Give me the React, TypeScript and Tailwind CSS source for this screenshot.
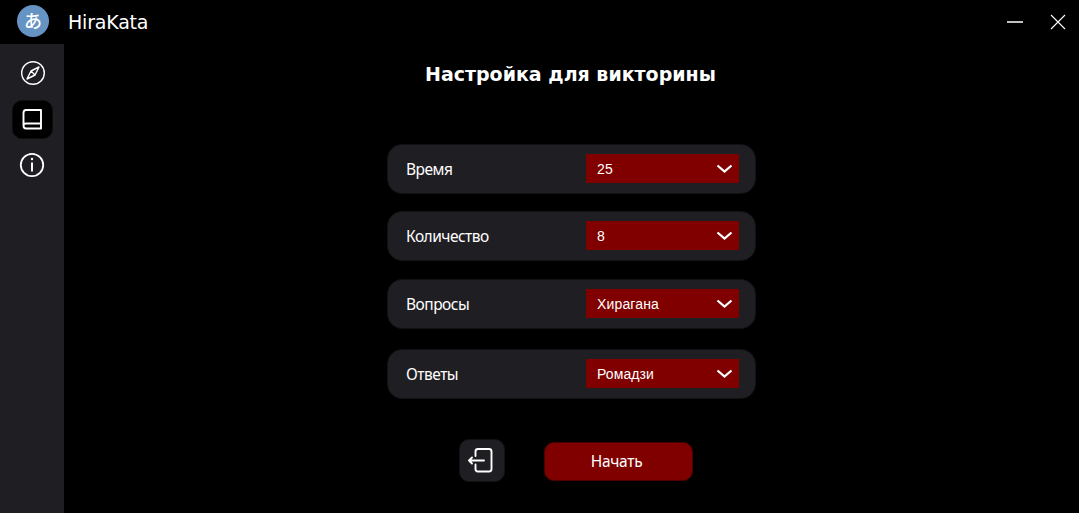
import React from "react";

const rows = [
  { label: "Время", value: "25", gap: "mt-0", track: "tracking-[0.3px]" },
  { label: "Количество", value: "8", gap: "mt-[17px]", track: "tracking-normal" },
  { label: "Вопросы", value: "Хирагана", gap: "mt-[18px]", track: "tracking-[0.15px]" },
  { label: "Ответы", value: "Ромадзи", gap: "mt-[20px]", track: "tracking-[0.1px]" },
];

function Chevron() {
  return (
    <svg className="mt-px h-[10px] w-[18px]" viewBox="0 0 18 10" fill="none" stroke="white" strokeWidth="2.3">
      <path d="M1.500 1.500 8.500 7.500l7-6" />
    </svg>
  );
}

export default function App() {
  return (
    <div className="flex h-[513px] w-[1079px] flex-col overflow-hidden bg-black text-white">
      <header className="flex h-11 shrink-0 items-start">
        <svg className="mt-[5px] ml-[17px] size-8" viewBox="0 0 32 32">
          <circle cx="16" cy="16" r="16" fill="#6593c3" />
          <text x="16" y="22.500" textAnchor="middle" fill="white" fontSize="18" fontWeight="500" fontFamily="'Noto Sans CJK JP', sans-serif">あ</text>
        </svg>
        <span className="mt-2 ml-[19px] font-['DejaVu_Sans',sans-serif] text-[19px] leading-7 tracking-[-0.2px]">HiraKata</span>
        <div className="mt-[13px] mr-3 ml-auto flex gap-[25px]">
          <svg className="h-[18px] w-[18px]" viewBox="0 0 18 18"><path d="M1 8h16v2H1z" fill="#c0c0c0" /></svg>
          <svg className="h-[18px] w-[18px]" viewBox="0 0 18 18"><path d="M2 2l14 14M16 2 2 16" stroke="white" strokeWidth="1.1" /></svg>
        </div>
      </header>
      <div className="flex min-h-0 flex-1">
        <aside className="flex w-16 shrink-0 flex-col items-center bg-[#1f1e23]">
          <svg className="mt-4 ml-0.5 size-[26px]" viewBox="0 0 26 26" fill="none" stroke="white" strokeWidth="1.4" strokeLinejoin="round">
            <circle cx="13" cy="13" r="11.3" />
            <path d="M19 7l-4 8L7 19l4-8L19 7ZM11 11l4 4" strokeWidth="1.400" />
          </svg>
          <div className="mt-[14px] ml-px flex h-[39px] w-[41px] items-center justify-center rounded-[10px] border border-[#0d0c0f] bg-black">
            <svg className="mr-px mb-px size-[22px]" viewBox="0 0 22 22" fill="none" stroke="white" strokeWidth="1.900" strokeLinejoin="round">
              <path d="M20 15.500V2H5Q2.500 2 2.500 5v12.500Q2.500 20.500 5 20.500H20v-5H5Q2.500 15.500 2.500 17.500" />
            </svg>
          </div>
          <svg className="mt-[13px] size-[26px]" viewBox="0 0 26 26" fill="none" stroke="white">
            <circle cx="13" cy="13" r="11.2" strokeWidth="1.8" />
            <path d="M13 10.500v9" strokeWidth="2" />
            <circle cx="13" cy="7" r="1.2" fill="white" stroke="none" />
          </svg>
        </aside>
        <main className="flex flex-1 flex-col">
          <h1 className="mt-4 ml-[361px] font-['DejaVu_Sans',sans-serif] text-[19px] leading-7 font-bold whitespace-nowrap">Настройка для викторины</h1>
          <div className="mt-[56px] ml-[323px] flex w-[369px] flex-col">
            {rows.map((r) => (
              <div key={r.label} className={`flex h-[50px] items-center rounded-[15px] border border-[#121114] bg-[#1f1e23] ${r.gap}`}>
                <span className="ml-[18px] w-[180px] pt-0.5 font-['Noto_Sans',sans-serif] text-[15.500px] tracking-[-0.5px]">{r.label}</span>
                <button className="mt-[-2px] flex h-[29px] w-[153px] items-center justify-between bg-[#800000] pr-[5px] pl-[11px]">
                  <span className={`pt-0.5 font-['Liberation_Sans',sans-serif] text-[14px] leading-5 ${r.track}`}>{r.value}</span>
                  <Chevron />
                </button>
              </div>
            ))}
          </div>
          <div className="mt-[40px] ml-[395px] flex items-center gap-[39px]">
            <button className="flex h-[43px] w-[46px] items-center justify-center rounded-[10px] border border-[#121114] bg-[#1f1e23]">
              <svg className="mr-[5px] mb-px h-[26px] w-[26px]" viewBox="0 0 26 26" fill="none" stroke="white" strokeWidth="1.9" strokeLinecap="round" strokeLinejoin="round">
                <path d="M8.500 9V4.500Q8.500 2 11 2h11q2.500 0 2.500 2.500V22q0 2.500-2.500 2.500H11Q8.500 24.500 8.500 22v-4.500M17 13.500H2M5 10.500l-3 3 3 3" />
              </svg>
            </button>
            <button className="mt-0.5 flex h-[39px] w-[149px] items-center justify-center rounded-[10px] border border-[#4d0000] bg-[#800000] pr-1 font-['Noto_Sans',sans-serif] text-[15.500px] tracking-[-0.3px]">Начать</button>
          </div>
        </main>
      </div>
    </div>
  );
}
